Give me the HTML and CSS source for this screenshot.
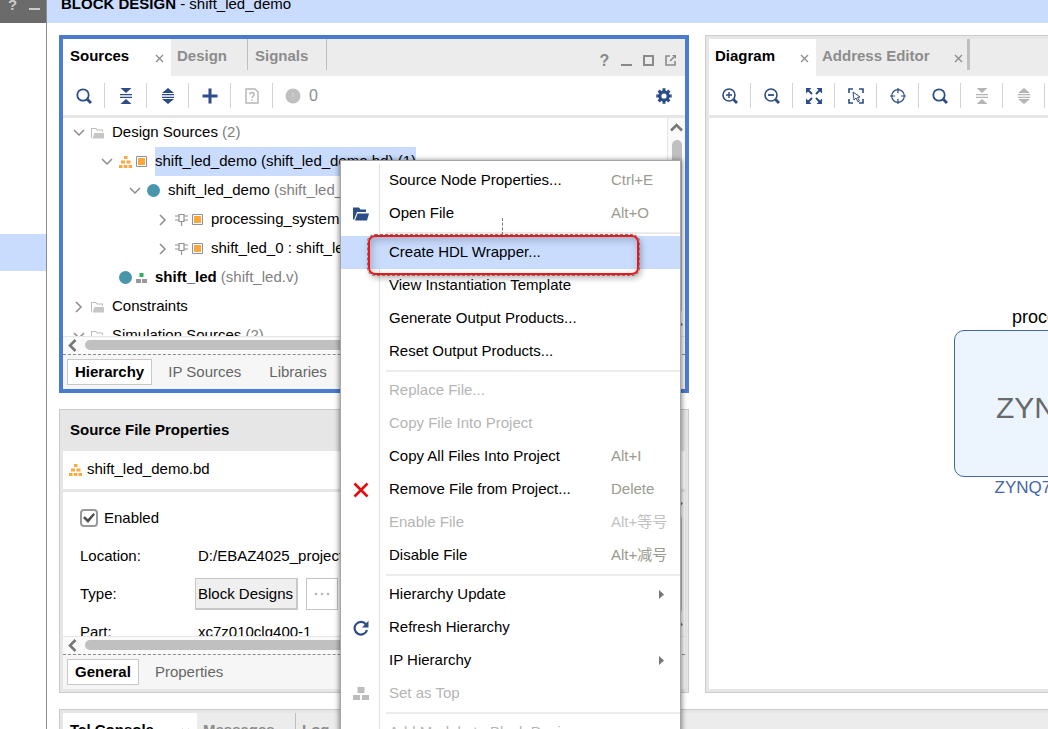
FILE: index.html
```html
<!DOCTYPE html>
<html lang="en">
<head>
<meta charset="utf-8">
<title>Block Design - shift_led_demo</title>
<link rel="stylesheet" href="styles.css">
</head>
<body>
<svg class="defs" aria-hidden="true">
  <symbol id="close" viewBox="0 0 9 9"><path d="M1 1l7 7M8 1l-7 7" stroke="#8c8c8c" stroke-width="1.3" fill="none"/></symbol>
  <symbol id="search" viewBox="0 0 16 16"><circle cx="7" cy="7" r="5.700" fill="none" stroke="currentColor" stroke-width="1.8"/><path d="M11 11l4 4" stroke="currentColor" stroke-width="2.8"/></symbol>
  <symbol id="zoom-in" viewBox="0 0 16 16"><circle cx="7" cy="7" r="6" fill="none" stroke="currentColor" stroke-width="1.6"/><path d="M7 4v6M4 7h6" stroke="currentColor" stroke-width="1.4"/><path d="M11.500 11.500l3.500 3.500" stroke="currentColor" stroke-width="2.8"/></symbol>
  <symbol id="zoom-out" viewBox="0 0 16 16"><circle cx="7" cy="7" r="6" fill="none" stroke="currentColor" stroke-width="1.6"/><path d="M4 7h6" stroke="currentColor" stroke-width="1.8"/><path d="M11.500 11.500l3.500 3.500" stroke="currentColor" stroke-width="2.8"/></symbol>
  <symbol id="collapse" viewBox="0 0 16 16"><path d="M2.500 0h11L8 5zM2.500 16h11L8 11zM2 6h12v1.300H2zM2 8.700h12V10H2z" fill="currentColor"/></symbol>
  <symbol id="expand" viewBox="0 0 16 16"><path d="M2 5h12L8 0zM2 11h12L8 16zM2 6h12v1.300H2zM2 8.700h12V10H2z" fill="currentColor"/></symbol>
  <symbol id="fit" viewBox="0 0 16 16"><path d="M0 0h5.500L0 5.500zM16 0h-5.500L16 5.500zM0 16h5.500L0 10.500zM16 16h-5.500l5.500-5.500z" fill="currentColor"/><path d="M2 2l4 4M14 2l-4 4M2 14l4-4M14 14l-4-4" stroke="currentColor" stroke-width="2"/></symbol>
  <symbol id="select" viewBox="0 0 16 16"><path d="M1 5V1h4M11 1h4v4M15 11v4h-4M5 15H1v-4" fill="none" stroke="currentColor" stroke-width="1.6"/><path d="M5 4l1 8 2-2 2 4 1.500-1-2-3.500 2.500-.5z" fill="none" stroke="currentColor" stroke-width="1"/></symbol>
  <symbol id="target" viewBox="0 0 16 16"><circle cx="8" cy="8" r="6.300" fill="none" stroke="currentColor" stroke-width="1.2"/><path d="M8 0v5M8 11v5M0 8h5M11 8h5" stroke="currentColor" stroke-width="1.2"/></symbol>
  <symbol id="down" viewBox="0 0 12 8"><path d="M1 1l5 5 5-5" fill="none" stroke="#8c8c8c" stroke-width="1.500"/></symbol>
  <symbol id="right" viewBox="0 0 8 12"><path d="M1 1l5 5-5 5" fill="none" stroke="#8c8c8c" stroke-width="1.500"/></symbol>
  <symbol id="left-arrow" viewBox="0 0 9 13"><path d="M7.500 1L2 6.500 7.500 12" fill="none" stroke="#777" stroke-width="2.600"/></symbol>
  <symbol id="up-arrow" viewBox="0 0 13 9"><path d="M1 7.500L6.500 2 12 7.500" fill="none" stroke="#777" stroke-width="2.600"/></symbol>
  <symbol id="down-arrow" viewBox="0 0 13 9"><path d="M1 1.500L6.500 7 12 1.500" fill="none" stroke="#777" stroke-width="2.600"/></symbol>
  <symbol id="folder" viewBox="0 0 14 12"><path d="M0 1h5l1.500 1.500H12V5h-1V3.500H6L4.500 2H1v9H0z" fill="#bdbdbd"/><path d="M3.500 6H13v5.500H1.500z" fill="#c6c6c6"/></symbol>
  <symbol id="blocks" viewBox="0 0 13 12"><path d="M5 0h3.500v3H5zM2 4.500h4v3H2zM7.500 4.500h4v3h-4zM0 9h3.500v3H0zM4.800 9h3.500v3H4.800zM9.500 9H13v3H9.500z" fill="#fba93c"/></symbol>
  <symbol id="bd" viewBox="0 0 11 11"><path d="M.5.5h10v10H.5z" fill="#fff" stroke="#8e939b"/><path d="M2 2h7v7H2z" fill="#fda63a"/></symbol>
  <symbol id="chip" viewBox="0 0 13 13"><path d="M4 1.500h5v7H4zM0 3h4M0 7h4M9 3h4M9 7h4M6.500 8.500V13" fill="none" stroke="#929292" stroke-width="1.200"/></symbol>
  <symbol id="dot" viewBox="0 0 13 13"><circle cx="6.500" cy="6.500" r="6.500" fill="#4796ab"/></symbol>
  <symbol id="window-max" viewBox="0 0 11 11"><path d="M1 1h9v9H1z" fill="none" stroke="#8a8a8a" stroke-width="2"/></symbol>
  <symbol id="window-min" viewBox="0 0 11 11"><path d="M0 10h11" stroke="#8a8a8a" stroke-width="2"/></symbol>
  <symbol id="window-float" viewBox="0 0 11 11"><path d="M5 1H1v9h9V6" fill="none" stroke="#8a8a8a" stroke-width="1.600"/><path d="M5 6l4-4" stroke="#8a8a8a" stroke-width="1.600"/><path d="M7 0h4v4z" fill="#8a8a8a"/></symbol>
</svg>

<aside class="navigator">
  <div class="nav-head"><button class="plain nav-help">?</button><button class="plain nav-min" aria-label="Minimize"></button></div>
  <div class="nav-selected"></div>
</aside>

<div class="app">
  <header class="title"><h1>BLOCK DESIGN</h1><span>&nbsp;- shift_led_demo</span></header>

  <main class="workspace">
    <section class="panel active sources">
      <nav class="tabs">
        <button class="tab current sources-tab">Sources<svg class="x"><use href="#close"/></svg></button>
        <button class="tab design-tab">Design</button>
        <button class="tab signals-tab">Signals</button>
        <div class="window-tools">
          <button class="plain help">?</button>
          <button class="plain" aria-label="Minimize"><svg><use href="#window-min"/></svg></button>
          <button class="plain" aria-label="Maximize"><svg><use href="#window-max"/></svg></button>
          <button class="plain" aria-label="Float"><svg><use href="#window-float"/></svg></button>
        </div>
      </nav>
      <div class="toolbar">
        <button class="tool" aria-label="Search"><svg><use href="#search"/></svg></button>
        <button class="tool" aria-label="Collapse all"><svg><use href="#collapse"/></svg></button>
        <button class="tool" aria-label="Expand all"><svg><use href="#expand"/></svg></button>
        <button class="tool" aria-label="Add sources"><svg viewBox="0 0 16 16"><path d="M8 .5v15M.5 8h15" stroke="currentColor" stroke-width="3"/></svg></button>
        <button class="tool off" aria-label="Missing files"><svg viewBox="0 0 16 16"><path d="M2 1h9l3 3v11H2z" fill="none" stroke="currentColor" stroke-width="1.400"/><path d="M5.800 6.500c0-3 4.500-2.500 4.400 0C10.200 8 8 8 8 10M8 11.200v1.600" fill="none" stroke="currentColor" stroke-width="1.400"/></svg></button>
        <button class="plain messages"><svg viewBox="0 0 16 16"><circle cx="8" cy="8" r="7.500" fill="#bfbfbf"/><path d="M8 4v5M8 10.500v1.500" stroke="#cecece" stroke-width="1.600"/></svg>0</button>
        <button class="plain gear" aria-label="Settings"><svg viewBox="0 0 16 16"><path d="M8 .3v15.400M.3 8h15.400M2.600 2.600l10.800 10.800M13.400 2.600L2.600 13.400" stroke="currentColor" stroke-width="3"/><circle cx="8" cy="8" r="4.200" fill="#fff" stroke="currentColor" stroke-width="3.200"/></svg></button>
      </div>
      <div class="scroll-body">
        <ul class="tree">
          <li class="level-0"><svg class="twist"><use href="#down"/></svg><svg class="folder"><use href="#folder"/></svg><span>Design Sources <i>(2)</i></span></li>
          <li class="level-1"><svg class="twist"><use href="#down"/></svg><svg class="blocks"><use href="#blocks"/></svg><svg class="bd"><use href="#bd"/></svg><span class="selected">shift_led_demo (shift_led_demo.bd) (1)</span></li>
          <li class="level-2"><svg class="twist"><use href="#down"/></svg><svg class="dot"><use href="#dot"/></svg><span>shift_led_demo <i>(shift_led_demo.v) (2)</i></span></li>
          <li class="level-3"><svg class="twist"><use href="#right"/></svg><svg class="chip"><use href="#chip"/></svg><svg class="bd"><use href="#bd"/></svg><span>processing_system7_0</span></li>
          <li class="level-3"><svg class="twist"><use href="#right"/></svg><svg class="chip"><use href="#chip"/></svg><svg class="bd"><use href="#bd"/></svg><span>shift_led_0 : shift_led</span></li>
          <li class="level-leaf"><svg class="dot"><use href="#dot"/></svg><svg class="module" viewBox="0 0 11 10"><path d="M3.500 0h4v4h-4z" fill="#34ac58"/><path d="M0 6h5v4H0zM6 6h5v4H6z" fill="#999"/></svg><span><b>shift_led</b> <i>(shift_led.v)</i></span></li>
          <li class="level-0"><svg class="twist"><use href="#right"/></svg><svg class="folder"><use href="#folder"/></svg><span>Constraints</span></li>
          <li class="level-0"><svg class="twist"><use href="#down"/></svg><svg class="folder"><use href="#folder"/></svg><span>Simulation Sources <i>(2)</i></span></li>
        </ul>
        <div class="vscroll"><svg><use href="#up-arrow"/></svg><div class="thumb"></div><svg><use href="#down-arrow"/></svg></div>
      </div>
      <div class="hscroll"><svg><use href="#left-arrow"/></svg><div class="thumb"></div></div>
      <nav class="views"><button class="view current">Hierarchy</button><button class="view">IP Sources</button><button class="view">Libraries</button></nav>
    </section>

    <section class="panel properties">
      <h2>Source File Properties</h2>
      <div class="file"><svg class="blocks"><use href="#blocks"/></svg><span>shift_led_demo.bd</span></div>
      <div class="scroll-body">
        <div class="form">
          <label class="field"><input type="checkbox" class="check" checked>Enabled</label>
          <div class="field"><span class="name">Location:</span><span class="value">D:/EBAZ4025_project_led</span></div>
          <div class="field"><span class="name">Type:</span><button class="type">Block Designs</button><button class="more" aria-label="Choose type"><svg viewBox="0 0 16 4"><circle cx="2" cy="2" r="1.300"/><circle cx="8" cy="2" r="1.300"/><circle cx="14" cy="2" r="1.300"/></svg></button></div>
          <div class="field"><span class="name">Part:</span><span class="value">xc7z010clg400-1</span></div>
        </div>
        <div class="vscroll"><svg><use href="#up-arrow"/></svg><div class="thumb"></div><svg><use href="#down-arrow"/></svg></div>
      </div>
      <div class="hscroll"><svg><use href="#left-arrow"/></svg><div class="thumb"></div></div>
      <nav class="views"><button class="view current">General</button><button class="view">Properties</button></nav>
    </section>

    <section class="panel diagram">
      <nav class="tabs">
        <button class="tab current diagram-tab">Diagram<svg class="x"><use href="#close"/></svg></button>
        <button class="tab address-tab">Address Editor<svg class="x"><use href="#close"/></svg></button>
      </nav>
      <div class="toolbar">
        <button class="tool" aria-label="Zoom in"><svg><use href="#zoom-in"/></svg></button>
        <button class="tool" aria-label="Zoom out"><svg><use href="#zoom-out"/></svg></button>
        <button class="tool" aria-label="Zoom fit"><svg><use href="#fit"/></svg></button>
        <button class="tool" aria-label="Select area"><svg><use href="#select"/></svg></button>
        <button class="tool" aria-label="Center"><svg><use href="#target"/></svg></button>
        <button class="tool" aria-label="Search"><svg><use href="#search"/></svg></button>
        <button class="tool off" aria-label="Collapse all"><svg><use href="#collapse"/></svg></button>
        <button class="tool off" aria-label="Expand all"><svg><use href="#expand"/></svg></button>
      </div>
      <div class="canvas">
        <figure class="node">
          <figcaption>processing_system7_0</figcaption>
          <div class="block">ZYNQ</div>
          <div class="kind">ZYNQ7 Processing System</div>
        </figure>
      </div>
    </section>

    <section class="panel console">
      <nav class="tabs">
        <button class="tab current tcl-tab">Tcl Console<svg class="x"><use href="#close"/></svg></button>
        <button class="tab messages-tab">Messages</button>
        <button class="tab log-tab">Log</button>
      </nav>
    </section>
  </main>
</div>

<div class="menu" role="menu">
  <button class="item" role="menuitem"><span class="icon"></span><span class="text">Source Node Properties...</span><kbd>Ctrl+E</kbd></button>
  <button class="item" role="menuitem"><span class="icon"><svg viewBox="0 0 16 13"><path d="M0 0h6l1.500 2H13v2.500H4L1.500 11v1H0z" fill="#2c4d86"/><path d="M4.500 6H16l-2 7H2z" fill="#2c4d86"/></svg></span><span class="text">Open File</span><kbd>Alt+O</kbd></button>
  <hr>
  <button class="item hover" role="menuitem"><span class="icon"></span><span class="text">Create HDL Wrapper...</span></button>
  <button class="item" role="menuitem"><span class="icon"></span><span class="text">View Instantiation Template</span></button>
  <button class="item" role="menuitem"><span class="icon"></span><span class="text">Generate Output Products...</span></button>
  <button class="item" role="menuitem"><span class="icon"></span><span class="text">Reset Output Products...</span></button>
  <hr>
  <button class="item" role="menuitem" disabled><span class="icon"></span><span class="text">Replace File...</span></button>
  <button class="item" role="menuitem" disabled><span class="icon"></span><span class="text">Copy File Into Project</span></button>
  <button class="item" role="menuitem"><span class="icon"></span><span class="text">Copy All Files Into Project</span><kbd>Alt+I</kbd></button>
  <button class="item" role="menuitem"><span class="icon"><svg viewBox="0 0 16 16"><path d="M1.500 1.500l13 13M14.500 1.500l-13 13" stroke="#e30b0b" stroke-width="2.600"/></svg></span><span class="text">Remove File from Project...</span><kbd>Delete</kbd></button>
  <button class="item" role="menuitem" disabled><span class="icon"></span><span class="text">Enable File</span><kbd>Alt+等号</kbd></button>
  <button class="item" role="menuitem"><span class="icon"></span><span class="text">Disable File</span><kbd>Alt+减号</kbd></button>
  <hr>
  <button class="item" role="menuitem"><span class="icon"></span><span class="text">Hierarchy Update</span><svg class="sub" viewBox="0 0 5 9"><path d="M0 0l5 4.500L0 9z"/></svg></button>
  <button class="item" role="menuitem"><span class="icon"><svg viewBox="0 0 16 16"><path d="M13 4.500A6.300 6.300 0 1 0 14 10" fill="none" stroke="#2c4d86" stroke-width="2.200"/><path d="M15.500.8v6.700H9z" fill="#2c4d86"/></svg></span><span class="text">Refresh Hierarchy</span></button>
  <button class="item" role="menuitem"><span class="icon"></span><span class="text">IP Hierarchy</span><svg class="sub" viewBox="0 0 5 9"><path d="M0 0l5 4.500L0 9z"/></svg></button>
  <button class="item" role="menuitem" disabled><span class="icon"><svg viewBox="0 0 16 14"><path d="M4.500 0h7v6h-7zM0 8h7v5H0zM9 8h7v5H9z" fill="#bdbdbd"/></svg></span><span class="text">Set as Top</span></button>
  <hr>
  <button class="item" role="menuitem" disabled><span class="icon"></span><span class="text">Add Module to Block Design</span></button>
  <div class="callout"></div>
  <div class="stem"></div>
</div>
</body>
</html>
```

FILE: styles.css
```css
* { box-sizing: border-box; }

body {
  margin: 0;
  height: 100vh;
  display: flex;
  position: relative;
  overflow: hidden;
  background: #fff;
  color: #000;
  font: 15px/18px "Liberation Sans", Arial, "Noto Sans CJK SC", sans-serif;
}

button {
  margin: 0;
  padding: 0;
  border: 0;
  background: none;
  color: inherit;
  font: inherit;
  text-align: left;
}

.defs { position: absolute; width: 0; height: 0; }
svg { display: block; flex: none; }

/* Navigator strip */
.navigator {
  flex: none;
  width: 47px;
  border-right: 1px solid #8c8c8c;
}
.nav-head {
  height: 23px;
  background: #6b6b6b;
  display: flex;
  gap: 12px;
  padding-left: 8px;
}
.nav-help { height: 10px; color: #ccc; font-weight: bold; line-height: 10px; }
.nav-min { width: 11px; height: 10px; border-bottom: 2px solid #ccc; }
.nav-selected { margin-top: 211px; height: 37px; background: #c9dcfe; }

.app { flex: 1; min-width: 0; display: flex; flex-direction: column; }
.title {
  height: 23px;
  padding-left: 14px;
  display: flex;
  background: #c9dcfe;
  line-height: 8px;
}
.title h1 { margin: 0; font-size: 15px; line-height: 8px; }

.workspace {
  flex: 1;
  min-height: 0;
  display: grid;
  grid-template-columns: minmax(0, 630fr) minmax(0, 343fr);
  grid-template-rows: minmax(0, 358fr) minmax(0, 284fr) 20px;
  gap: 16px;
  padding: 12px 0 0 12px;
}

.panel {
  display: flex;
  flex-direction: column;
  overflow: hidden;
  border: 1px solid #cbcbcb;
  box-shadow: inset 0 0 0 3px #e6e6e6;
  padding: 3px;
}
.panel.active { border: 4px solid #4a7bce; padding: 0; box-shadow: none; }
.diagram { grid-column: 2; grid-row: 1 / span 2; border-right: 0; padding-right: 0; }
.properties { grid-column: 1; grid-row: 2; }
.console { grid-column: 1 / span 2; border-right: 0; border-bottom: 0; padding-right: 0; padding-bottom: 0; }

/* Tabs */
.tabs { flex: none; height: 37px; display: flex; background: #ececec; }
.tab {
  height: 31px;
  padding: 3px 8px 0 8px;
  display: flex;
  align-items: center;
  justify-content: space-between;
  color: #8c8c8c;
  font-weight: bold;
  border-right: 1px solid #bfbfbf;
}
.tab.current { height: 37px; background: #fff; color: #000; border: 0; padding: 0 7px 3px 7px; }
.tab .x { width: 9px; height: 9px; margin-top: 4px; }
.sources-tab { width: 108px; }
.design-tab { width: 77px; padding-left: 6px; }
.signals-tab { width: 79px; padding-left: 7px; }
.diagram-tab.current { width: 107px; padding-left: 6px; }
.address-tab { width: 154px; padding-left: 6px; padding-right: 4px; border-right: 3px solid #bfbfbf; }
.tcl-tab { width: 134px; }
.messages-tab { width: 99px; padding-left: 6px; }
.log-tab { padding-left: 6px; border: 0; }

.window-tools {
  flex: 1;
  display: flex;
  justify-content: flex-end;
  align-items: center;
  gap: 11px;
  padding: 6px 9px 0 0;
}
.window-tools svg { width: 11px; height: 11px; }
.help { width: 11px; color: #8a8a8a; font-size: 16px; font-weight: bold; text-align: center; }

/* Toolbars */
.toolbar {
  flex: none;
  height: 42px;
  display: flex;
  align-items: center;
  border-bottom: 3px solid #e6e6e6;
  background: #fff;
  color: #2c4d86;
  overflow: hidden;
}
.tool {
  flex: none;
  width: 42px;
  height: 25px;
  display: flex;
  align-items: center;
  justify-content: center;
  border-right: 1px solid #d3d3d3;
}
.tool svg, .messages svg, .gear svg { width: 16px; height: 16px; }
.off { color: #b5b5b5; }
.messages { display: flex; align-items: center; gap: 8px; padding-left: 12px; color: #8c8c8c; font-size: 16px; }
.gear { margin-left: auto; padding-right: 13px; }

/* Scroll areas */
.scroll-body { flex: 1; min-height: 0; display: flex; overflow: hidden; }
.vscroll {
  flex: none;
  width: 18px;
  display: flex;
  flex-direction: column;
  align-items: center;
  gap: 8px;
  padding: 5px 0;
  border-left: 1px solid #e6e6e6;
  background: #fafafa;
}
.vscroll svg { width: 13px; height: 9px; }
.vscroll .thumb { flex: 1; width: 10px; border-radius: 5px; background: #c0c0c0; }
.hscroll {
  flex: none;
  height: 18px;
  display: flex;
  align-items: center;
  gap: 8px;
  padding: 0 18px 1px 5px;
  border-top: 1px solid #e6e6e6;
  background: #fafafa;
}
.hscroll svg { width: 9px; height: 13px; }
.hscroll .thumb { flex: 1; height: 10px; border-radius: 5px; background: #c0c0c0; }

.views {
  flex: none;
  height: 35px;
  display: flex;
  align-items: center;
  gap: 8px;
  padding: 0 4px;
  border-top: 1px dashed #8c8c8c;
  background: #f6f6f6;
  color: #666;
}
.view { height: 26px; padding: 0 7px; border: 1px solid transparent; white-space: nowrap; }
.view + .view { margin-right: 4px; }
.view.current { border-color: #c8c8c8; background: #fff; color: #000; font-weight: bold; }

/* Source tree */
.tree { flex: 1; min-width: 0; margin: 0; padding: 0; list-style: none; overflow: hidden; }
.tree li { height: 29px; display: flex; align-items: center; white-space: nowrap; }
.tree span { height: 29px; line-height: 27px; }
.tree i { color: #808080; font-style: normal; }
.level-0 { padding-left: 10px; }
.level-1 { padding-left: 38px; }
.level-2 { padding-left: 66px; }
.level-3 { padding-left: 94px; }
.level-leaf { padding-left: 56px; }
.twist { width: 12px; height: 12px; margin-right: 6px; }
.folder { width: 14px; height: 12px; margin-right: 7px; }
.blocks { width: 13px; height: 12px; margin-right: 4px; }
.bd { width: 11px; height: 11px; margin-right: 8px; }
.chip { width: 13px; height: 13px; margin-right: 4px; }
.dot { width: 13px; height: 13px; margin-right: 8px; }
.level-leaf .dot { margin-right: 4px; }
.module { width: 11px; height: 10px; margin-right: 8px; }
.selected { background: #c9dcfe; }

/* Properties */
.properties h2 { flex: none; height: 38px; margin: 0; padding-left: 7px; background: #e6e6e6; font-size: 15px; line-height: 34px; }
.file { flex: none; height: 41px; display: flex; align-items: center; padding-left: 6px; border-bottom: 3px solid #e6e6e6; }
.file .blocks { margin-right: 5px; }
.file span { padding-bottom: 2px; }
.form { flex: 1; min-width: 0; padding: 7px 0 0 17px; }
.field { height: 38px; display: flex; align-items: center; }
.name { width: 115px; }
.value { padding-left: 3px; }
.check {
  appearance: none;
  width: 18px;
  height: 18px;
  margin: 0 6px 0 0;
  border: 2px solid #999;
  border-radius: 4px;
  background: #fff;
  display: grid;
  place-content: center;
}
.check:checked::before {
  content: "";
  width: 12px;
  height: 10px;
  background: #4d4d4d;
  clip-path: polygon(0 50%, 15% 32%, 40% 60%, 88% 0, 100% 15%, 42% 100%);
}
.type { height: 32px; padding: 0 3px 0 2px; border: 1px solid #c8c8c8; border-right-width: 2px; border-bottom-width: 2px; background: #efefef; }
.more { width: 32px; height: 32px; margin-left: 8px; border: 1px solid #c4c4c4; display: grid; place-content: center; }
.more svg { width: 16px; height: 4px; fill: #b5b5b5; }

/* Diagram canvas */
.canvas { flex: 1; position: relative; overflow: hidden; background: #fff; }
.node { position: absolute; left: 245px; top: 188px; width: 288px; margin: 0; text-align: center; white-space: nowrap; }
.node figcaption { height: 24px; padding-left: 12px; font-size: 18px; line-height: 22px; }
.block {
  height: 147px;
  padding-left: 41px;
  border: 1px solid #4566a8;
  border-radius: 10px;
  background: #ecf4fe;
  color: #696969;
  font-size: 30px;
  line-height: 153px;
  text-align: left;
}
.kind { color: #4566a8; font-size: 17px; line-height: 22px; }

/* Context menu */
.menu {
  position: absolute;
  left: 340px;
  top: 160px;
  width: 341px;
  padding-top: 3px;
  border: 1px solid #a6a6a6;
  border-bottom: 0;
  background: linear-gradient(#e2e2e2, #e2e2e2) 38px 3px / 1px 100% no-repeat #fff;
  box-shadow: 0 1px 5px 1px rgba(0, 0, 0, 0.45);
}
.item { width: 100%; height: 33px; display: flex; align-items: center; white-space: nowrap; }
.item:disabled { color: #b5b5b5; }
.item.hover { background: #c9dcfe; }
.icon { flex: none; width: 48px; height: 16px; padding-left: 12px; display: flex; align-items: center; }
.icon svg { width: 16px; height: 16px; }
.text, .item kbd { padding-bottom: 2px; }
.item kbd { width: 69px; margin-left: auto; color: #9b9b8e; font: inherit; }
.item:disabled kbd { color: #c2c2c2; }
.sub { width: 5px; height: 9px; margin: 0 16px 0 auto; fill: #777; }
.menu hr { height: 6px; margin: 0 0 0 45px; border: 0; background: linear-gradient(#ececec, #ececec) 0 2px / 100% 2px no-repeat; }

/* Highlight around the chosen command */
.callout {
  position: absolute;
  left: 27px;
  top: 74px;
  width: 271px;
  height: 40px;
  border: 2px solid #f01414;
  border-radius: 7px;
  outline: 1px dashed #777;
  box-shadow: 2px 3px 6px rgba(0, 0, 0, 0.3), inset 2px 3px 8px rgba(0, 0, 0, 0.22);
}
.stem { position: absolute; left: 161px; top: 57px; height: 17px; border-left: 1px dashed #777; }
```
